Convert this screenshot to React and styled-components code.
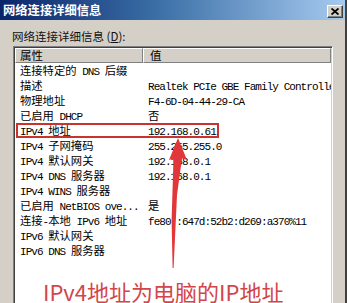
import React from "react";
import styled, { createGlobalStyle } from "styled-components";

const GlobalStyle = createGlobalStyle`
  html, body {
    margin: 0;
    padding: 0;
    background: #d4d0c8;
    overflow: hidden;
  }
`;

const Window = styled.div`
  position: relative;
  width: 347px;
  height: 303px;
  box-sizing: border-box;
  background: #d4d0c8;
  border-right: 2px solid #404040;
  display: flex;
  flex-direction: column;
  overflow: hidden;
  font-family: "Noto Sans CJK SC", "Noto Sans", sans-serif;
  color: #000;
`;

const TitleBar = styled.div`
  height: 20px;
  flex-shrink: 0;
  display: flex;
  align-items: center;
  justify-content: space-between;
  padding: 0 2px 0 3px;
  background: linear-gradient(to right, #0a246a 0%, #3a6ea5 45%, #a6caf0 100%);
`;

const Title = styled.span`
  color: #fff;
  font-weight: 700;
  font-size: 12.3px;
  line-height: 20px;
`;

const CloseButton = styled.div`
  width: 16px;
  height: 13px;
  margin-top: 2px;
  box-sizing: border-box;
  display: flex;
  align-items: center;
  justify-content: center;
  background: #d4d0c8;
  border-top: 1px solid #fff;
  border-left: 1px solid #fff;
  border-right: 1px solid #404040;
  border-bottom: 1px solid #404040;
  box-shadow: inset -1px -1px 0 #808080;
`;

const Body = styled.div`
  flex: 1;
  display: flex;
  flex-direction: column;
  padding: 8px 12px 0 12px;
  min-height: 0;
`;

const Label = styled.div`
  font-size: 11.5px;
  line-height: 16px;
  height: 16px;
  margin-bottom: 2px;
  color: #111;
`;

const ListBox = styled.div`
  position: relative;
  flex: 1;
  margin-left: 1px;
  margin-bottom: -6px;
  background: #fff;
  border-top: 1px solid #808080;
  border-left: 1px solid #808080;
  border-right: 1px solid #fff;
  border-bottom: 1px solid #fff;
  box-shadow: inset 1px 1px 0 #404040, inset -1px -1px 0 #d4d0c8;
  padding: 1px 1px 0 1px;
  overflow: hidden;
`;

const Header = styled.div`
  display: grid;
  grid-template-columns: 128px 1fr;
  height: 15px;
`;

const HeaderCell = styled.div`
  box-sizing: border-box;
  background: #d4d0c8;
  border-top: 1px solid #fff;
  border-left: 1px solid #fff;
  border-bottom: 1px solid #808080;
  border-right: 1px solid #808080;
  font-size: 11.5px;
  line-height: 13px;
  padding-left: ${(p) => p.$pad}px;
  white-space: nowrap;
  overflow: hidden;
`;

const Row = styled.div`
  position: relative;
  display: grid;
  grid-template-columns: 128px 1fr;
  height: 15px;
  &:first-of-type {
    margin-top: 1px;
  }
`;

const Cell = styled.div`
  font-size: 11.3px;
  line-height: 15px;
  padding-left: 5px;
  white-space: nowrap;
  overflow: hidden;
`;

const Latin = styled.span`
  font-family: "Liberation Mono", "DejaVu Sans Mono", monospace;
  font-size: 11px;
  letter-spacing: -0.95px;
  white-space: pre;
`;

const Highlight = styled.div`
  position: absolute;
  left: 1px;
  top: 0;
  width: 203px;
  height: 15px;
  box-sizing: border-box;
  border: 2px solid #c8332f;
`;

const Arrow = styled.svg`
  position: absolute;
  left: 160px;
  top: 130px;
  width: 40px;
  height: 145px;
`;

const Caption = styled.div`
  position: absolute;
  left: 43px;
  top: 280px;
  font-size: 22px;
  line-height: 22px;
  color: #d2464a;
  white-space: nowrap;
`;

const Mixed = ({ text }) =>
  text
    .split(/([\u0000-\u00ff]+)/)
    .filter(Boolean)
    .map((part, i) =>
      /^[\u0000-\u00ff]+$/.test(part) ? <Latin key={i}>{part}</Latin> : <span key={i}>{part}</span>
    );

const rows = [
  ["连接特定的 DNS 后缀", ""],
  ["描述", "Realtek PCIe GBE Family Controller"],
  ["物理地址", "F4-6D-04-44-29-CA"],
  ["已启用 DHCP", "否"],
  ["IPv4 地址", "192.168.0.61", true],
  ["IPv4 子网掩码", "255.255.255.0"],
  ["IPv4 默认网关", "192.168.0.1"],
  ["IPv4 DNS 服务器", "192.168.0.1"],
  ["IPv4 WINS 服务器", ""],
  ["已启用 NetBIOS ove...", "是"],
  ["连接-本地 IPv6 地址", "fe80::647d:52b2:d269:a370%11"],
  ["IPv6 默认网关", ""],
  ["IPv6 DNS 服务器", ""],
];

export default function App() {
  return (
    <>
      <GlobalStyle />
      <Window>
        <TitleBar>
          <Title>网络连接详细信息</Title>
          <CloseButton>
            <svg width="8" height="7" viewBox="0 0 8 7">
              <path d="M0.5 0.5 L7.5 6.5 M7.5 0.5 L0.5 6.5" stroke="#000" strokeWidth="1.8" />
            </svg>
          </CloseButton>
        </TitleBar>
        <Body>
          <Label>
            网络连接详细信息 (<u>D</u>):
          </Label>
          <ListBox>
            <Header>
              <HeaderCell $pad={4}>属性</HeaderCell>
              <HeaderCell $pad={6}>值</HeaderCell>
            </Header>
            {rows.map(([name, value, marked]) => (
              <Row key={name}>
                <Cell>
                  <Mixed text={name} />
                </Cell>
                <Cell>
                  <Mixed text={value} />
                </Cell>
                {marked && <Highlight />}
              </Row>
            ))}
          </ListBox>
        </Body>
        <Arrow viewBox="0 0 40 145">
          <path
            d="M18 8 L27 30 L22 28.5 L17 65 L13.6 138 L12.6 138 L11.6 90 L13.5 28.5 L9 30 Z"
            fill="#e2373a"
          />
        </Arrow>
        <Caption>IPv4地址为电脑的IP地址</Caption>
      </Window>
    </>
  );
}
